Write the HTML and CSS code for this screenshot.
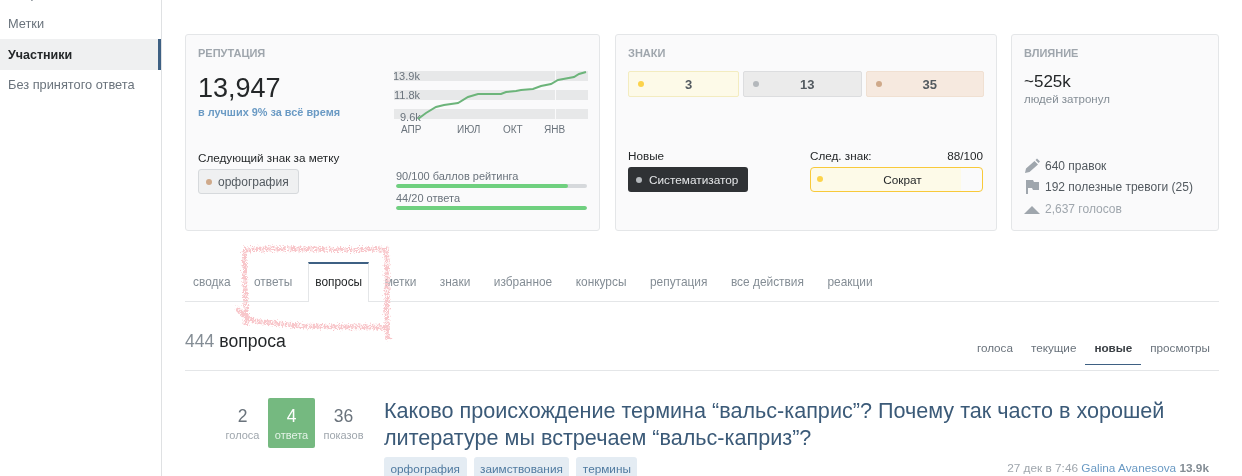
FILE: index.html
```html
<!DOCTYPE html>
<html lang="ru">
<head>
    <meta charset="UTF-8">
    <title>Вопросы участника</title>
    <link rel="stylesheet" href="styles.css">
</head>
<body>
<div class="page">
    <nav class="sidebar">
        <a class="side-link side-cut">Вопросы</a>
        <a class="side-link">Метки</a>
        <a class="side-link side-active">Участники</a>
        <a class="side-link">Без принятого ответа</a>
    </nav>

    <main class="content">
        <section class="cards">
            <div class="card card-rep">
                <h2 class="card-title">Репутация</h2>
                <div class="rep-top">
                    <div class="rep-left">
                        <div class="rep-number">13,947</div>
                        <div class="rep-rank">в лучших 9% за всё время</div>
                    </div>
                    <svg class="rep-chart" width="194" height="66" viewBox="0 0 194 66">
                        <rect x="0" y="2" width="194" height="10" fill="#e7e8e9"/>
                        <rect x="0" y="21" width="194" height="10" fill="#e7e8e9"/>
                        <rect x="0" y="40" width="194" height="10" fill="#e7e8e9"/>
                        <rect x="161" y="2" width="1" height="48" fill="#fafafb"/>
                        <text class="chart-y" x="-1" y="11">13.9k</text>
                        <text class="chart-y" x="0" y="30">11.8k</text>
                        <text class="chart-y" x="6" y="52">9.6k</text>
                        <polyline fill="none" stroke="#6cb47a" stroke-width="2" points="24,50 32,44 42,38 50,36 64,34 74,28 84,25 107,25 112,23 122,22 127,21 139,20 147,17 157,15 164,11 180,8 185,5 192,3"/>
                        <text class="chart-x" x="7" y="64">АПР</text>
                        <text class="chart-x" x="63" y="64">ИЮЛ</text>
                        <text class="chart-x" x="109" y="64">ОКТ</text>
                        <text class="chart-x" x="150" y="64">ЯНВ</text>
                    </svg>
                </div>
                <div class="rep-bottom">
                    <div class="rep-left">
                        <div class="next-label">Следующий знак за метку</div>
                        <span class="tag-chip"><i class="dot dot-bronze"></i>орфография</span>
                    </div>
                    <div class="progress-col">
                        <div class="progress-label">90/100 баллов рейтинга</div>
                        <div class="progress"><div class="progress-fill" style="width: 90%"></div></div>
                        <div class="progress-label">44/20 ответа</div>
                        <div class="progress"><div class="progress-fill" style="width: 100%"></div></div>
                    </div>
                </div>
            </div>

            <div class="card card-badges">
                <h2 class="card-title">Знаки</h2>
                <div class="badge-row">
                    <div class="badge badge-gold"><i class="dot dot-gold"></i><b>3</b></div>
                    <div class="badge badge-silver"><i class="dot dot-silver"></i><b>13</b></div>
                    <div class="badge badge-bronze"><i class="dot dot-bronze"></i><b>35</b></div>
                </div>
                <div class="badge-bottom">
                    <div>
                        <div class="badge-caption">Новые</div>
                        <span class="badge-dark"><i class="dot dot-silver"></i>Систематизатор</span>
                    </div>
                    <div class="next-badge">
                        <div class="badge-caption next-caption"><span>След. знак:</span><span>88/100</span></div>
                        <div class="next-box"><i class="dot dot-gold"></i>Сократ</div>
                    </div>
                </div>
            </div>

            <div class="card card-impact">
                <h2 class="card-title">Влияние</h2>
                <div class="impact-number">~525k</div>
                <div class="impact-sub">людей затронул</div>
                <ul class="impact-list">
                    <li>
                        <svg width="16" height="16" viewBox="0 0 16 16"><path fill="#9fa6ad" d="M1 15l1-4.500L10.500 3 14 6.500 5.500 14zM11.500 2l1.500-1.500 3 3L14.500 5z"/></svg>
                        640 правок
                    </li>
                    <li>
                        <svg width="16" height="16" viewBox="0 0 16 16"><path fill="#9fa6ad" d="M2 1h7l1 2h5v8H9l-1-2H4v6H2z"/></svg>
                        192 полезные тревоги (25)
                    </li>
                    <li class="impact-muted">
                        <svg width="16" height="16" viewBox="0 0 16 16"><path fill="#9fa6ad" d="M0 13L8 5l8 8z"/></svg>
                        2,637 голосов
                    </li>
                </ul>
            </div>
        </section>

        <div class="tabs">
            <a class="tab">сводка</a>
            <a class="tab">ответы</a>
            <a class="tab tab-active">вопросы</a>
            <a class="tab">метки</a>
            <a class="tab">знаки</a>
            <a class="tab">избранное</a>
            <a class="tab">конкурсы</a>
            <a class="tab">репутация</a>
            <a class="tab">все действия</a>
            <a class="tab">реакции</a>
        </div>

        <div class="list-head">
            <h1 class="list-title"><span>444</span> вопроса</h1>
            <div class="sort">
                <a class="sort-item">голоса</a>
                <a class="sort-item">текущие</a>
                <a class="sort-item sort-active">новые</a>
                <a class="sort-item">просмотры</a>
            </div>
        </div>

        <article class="question">
            <div class="stats">
                <div class="stat"><strong>2</strong>голоса</div>
                <div class="stat stat-answered"><strong>4</strong>ответа</div>
                <div class="stat"><strong>36</strong>показов</div>
            </div>
            <div class="question-body">
                <a class="question-title">Каково происхождение термина “вальс-каприс”? Почему так часто в хорошей литературе мы встречаем “вальс-каприз”?</a>
                <div class="question-foot">
                    <div class="tags">
                        <span class="tag">орфография</span>
                        <span class="tag">заимствования</span>
                        <span class="tag">термины</span>
                    </div>
                    <div class="meta">27 дек в 7:46 <a>Galina Avanesova</a> <b>13.9k</b></div>
                </div>
            </div>
        </article>
    </main>
</div>

<!-- Red pencil mark over the tabs -->
<svg class="scribble" width="170" height="110" viewBox="0 0 170 110">
    <defs>
        <filter id="pencil" x="-10%" y="-10%" width="120%" height="120%">
            <feTurbulence type="fractalNoise" baseFrequency="0.6" numOctaves="2" seed="4"/>
            <feDisplacementMap in="SourceGraphic" scale="7"/>
            <feGaussianBlur stdDeviation="0.4"/>
        </filter>
    </defs>
    <path filter="url(#pencil)" fill="none" stroke="#f8c6ca" stroke-width="5" stroke-dasharray="2.500 1" d="M13 10C60 7 110 11 154 9C157 30 153 70 156 100M13 10C11 35 15 60 14 85M5 68C14 80 20 81 40 83C80 89 120 85 158 88"/>
</svg>
</body>
</html>
```

FILE: styles.css
```css
* {
    box-sizing: border-box;
}

html, body {
    margin: 0;
    height: 476px;
    overflow: hidden;
    background-color: #fff;
}

body {
    font-family: "Liberation Sans", Arial, sans-serif;
    font-size: 12px;
    color: #3b4045;
    position: relative;
}

.page {
    display: flex;
    height: 476px;
    filter: blur(0.35px);
}

/* Sidebar */
.sidebar {
    width: 162px;
    flex-shrink: 0;
    border-right: 1px solid #dfe1e3;
    padding-top: 9px;
}

.side-link {
    display: block;
    height: 30px;
    line-height: 30px;
    padding-left: 8px;
    font-size: 12.800px;
    color: #6a737c;
}

.side-cut {
    margin-top: -30px;
}

.side-active {
    height: 31px;
    line-height: 32px;
    font-size: 12.500px;
    font-weight: bold;
    color: #242729;
    background-color: #eff0f1;
    border-right: 3px solid #3e6083;
}

/* Content */
.content {
    flex: 1;
    padding: 34px 23px 0;
    min-width: 0;
}

.cards {
    display: flex;
    gap: 15px;
    height: 197px;
}

.card {
    background-color: #fafafb;
    border: 1px solid #e4e6e8;
    border-radius: 3px;
    padding: 12px;
}

.card-rep {
    width: 415px;
}

.card-badges {
    width: 382px;
    margin-right: -1px;
}

.card-impact {
    width: 208px;
}

.card-title {
    margin: 0;
    font-size: 11px;
    line-height: 13px;
    font-weight: bold;
    text-transform: uppercase;
    color: #9fa6ad;
}

.rep-top {
    display: flex;
    justify-content: space-between;
    margin-top: 3px;
}

.rep-number {
    margin-top: 9px;
    font-size: 27px;
    line-height: 32px;
    color: #242729;
}

.rep-rank {
    margin-top: 2px;
    font-size: 10.900px;
    font-weight: bold;
    color: #6a9ac4;
}

.rep-chart {
    margin: 6px -1px 0 0;
}

.chart-y {
    font-size: 11px;
    fill: #6a737c;
}

.chart-x {
    font-size: 10px;
    fill: #6a737c;
}

.rep-bottom {
    display: flex;
    justify-content: space-between;
    margin-top: 16px;
}

.next-label {
    font-size: 11.700px;
    line-height: 14px;
    color: #242729;
}

.tag-chip {
    display: inline-flex;
    align-items: center;
    gap: 6px;
    margin-top: 4px;
    height: 25px;
    padding: 0 9px 0 7px;
    font-size: 12px;
    color: #535a60;
    background-color: #eff0f1;
    border: 1px solid #d6d9dc;
    border-radius: 3px;
}

.dot {
    display: inline-block;
    width: 6px;
    height: 6px;
    border-radius: 50%;
    flex-shrink: 0;
}

.dot-gold { background-color: #fcd34a; }
.dot-silver { background-color: #b4b8bc; }
.dot-bronze { background-color: #cfa98a; }

.progress-col {
    width: 191px;
    margin-top: 19px;
}

.progress-label {
    font-size: 11px;
    line-height: 13px;
    color: #6a737c;
}

.progress {
    height: 4px;
    margin: 1px 0 4px;
    background-color: #d6d9dc;
    border-radius: 2px;
    overflow: hidden;
}

.progress-fill {
    height: 100%;
    background-color: #6fd07f;
    border-radius: 2px;
}

/* Badges */
.badge-row {
    display: flex;
    gap: 4px;
    margin-top: 11px;
}

.badge {
    display: flex;
    align-items: center;
    flex: 1;
    height: 26px;
    padding-left: 9px;
    border-radius: 2px;
    border: 1px solid;
}

.badge b {
    flex: 1;
    text-align: center;
    padding-right: 5px;
    font-size: 13px;
    color: #535a60;
}

.badge-gold {
    flex: 0 0 111px;
    background-color: #fdfae8;
    border-color: #f3ecc0;
}

.badge-silver { background-color: #ebebeb; border-color: #dcdddf; }
.badge-bronze { background-color: #f6e9df; border-color: #f0e0d2; }

.badge-bottom {
    display: flex;
    justify-content: space-between;
    margin-top: 52px;
    width: 355px;
}

.badge-caption {
    font-size: 11.700px;
    line-height: 14px;
    color: #242729;
}

.next-caption {
    display: flex;
    justify-content: space-between;
}

.badge-dark {
    display: inline-flex;
    align-items: center;
    gap: 7px;
    margin-top: 4px;
    height: 25px;
    padding: 0 10px 0 8px;
    font-size: 11.800px;
    color: #e4e6e8;
    background-color: #2f3235;
    border-radius: 3px;
}

.next-badge {
    width: 173px;
}

.next-box {
    display: flex;
    align-items: center;
    justify-content: center;
    position: relative;
    margin-top: 4px;
    height: 25px;
    padding-left: 12px;
    font-size: 11.800px;
    color: #242729;
    background: linear-gradient(to right, #fdfae8 88%, #fafafb 88%);
    border: 1px solid #f8c93a;
    border-radius: 4px;
}

.next-box .dot {
    position: absolute;
    left: 6px;
    top: 8px;
}

/* Impact */
.impact-number {
    margin-top: 12px;
    font-size: 17px;
    line-height: 20px;
    color: #242729;
}

.impact-sub {
    margin-top: 1px;
    font-size: 11.500px;
    color: #848d95;
}

.impact-list {
    list-style: none;
    margin: 50px 0 0;
    padding: 0;
}

.impact-list li {
    display: flex;
    align-items: center;
    gap: 5px;
    height: 21.500px;
    font-size: 12px;
    color: #535a60;
}

.impact-list .impact-muted {
    color: #9fa6ad;
}

/* Tabs */
.tabs {
    display: flex;
    align-items: flex-start;
    height: 40px;
    margin-top: 31px;
    border-bottom: 1px solid #e4e6e8;
}

.tab {
    height: 39px;
    line-height: 40px;
    padding: 0 8px;
    margin-right: 7.500px;
    font-size: 11.900px;
    color: #848d95;
}

.tab-active {
    color: #242729;
    background-color: #fff;
    border: 1px solid #e4e6e8;
    border-top: 2px solid #3e6083;
    border-bottom: 0;
    margin-left: 0.500px;
    padding: 0 6px;
    height: 40px;
    line-height: 36px;
}

.list-head {
    display: flex;
    justify-content: space-between;
    height: 69px;
    border-bottom: 1px solid #e4e6e8;
}

.list-title {
    margin: 29px 0 0;
    font-size: 17.600px;
    line-height: 20px;
    font-weight: normal;
    color: #242729;
}

.list-title span {
    color: #848d95;
}

.sort {
    display: flex;
    align-self: flex-end;
    margin-bottom: 5px;
}

.sort-item {
    padding: 0 9px;
    height: 24px;
    line-height: 14px;
    font-size: 11.700px;
    color: #6a737c;
}

.sort-active {
    font-weight: bold;
    color: #3b4045;
    border-bottom: 1px solid #3e6083;
}

/* Question row */
.question {
    display: flex;
    padding-top: 27px;
}

.stats {
    display: flex;
    align-items: flex-start;
    margin-left: 34px;
    width: 165px;
}

.stat {
    display: flex;
    flex-direction: column;
    align-items: center;
    width: 47px;
    height: 50px;
    padding-top: 8px;
    font-size: 11px;
    color: #9fa6ad;
}

.stat strong {
    font-size: 17.500px;
    line-height: 20px;
    font-weight: normal;
    color: #6a737c;
    margin-bottom: 3px;
}

.stat-answered {
    margin: 0 5px 0 2px;
    color: #e3f3e6;
    background-color: #75b980;
    border-radius: 2px;
}

.stat-answered strong {
    color: #fff;
}

.question-body {
    flex: 1;
    min-width: 0;
}

.question-title {
    display: block;
    width: 800px;
    margin-top: -1px;
    font-size: 21.600px;
    line-height: 27px;
    color: #3b5a78;
}

.question-foot {
    display: flex;
    justify-content: space-between;
    margin-top: 6px;
    padding-right: 10px;
}

.tags {
    display: flex;
    gap: 7px;
}

.tag {
    padding: 0 6.500px;
    height: 24px;
    line-height: 24px;
    font-size: 11.800px;
    color: #4f7aa0;
    background-color: #e4ecf3;
    border-radius: 3px;
}

.meta {
    padding-top: 4px;
    font-size: 11.800px;
    color: #9fa6ad;
}

.meta a {
    color: #6a9ac4;
}

.meta b {
    color: #848d95;
}

.scribble {
    position: absolute;
    left: 232px;
    top: 240px;
    pointer-events: none;
}
```
